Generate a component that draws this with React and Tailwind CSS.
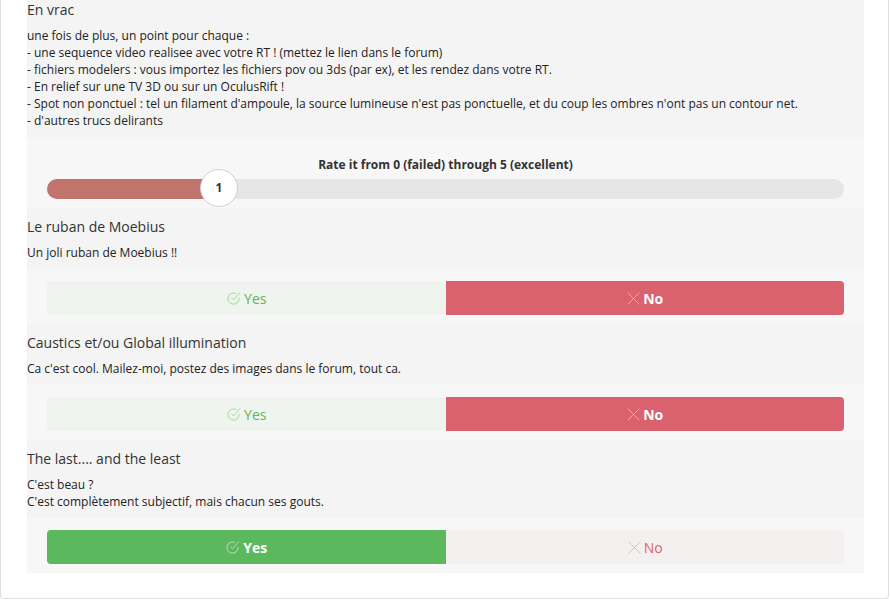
import React from 'react';

const CheckIcon = ({ className }) => (
  <svg viewBox="0 0 24 24" className={className} fill="none" stroke="currentColor" strokeWidth="1.3" strokeLinecap="round" strokeLinejoin="round">
    <path d="M21 11.5V12a9 9 0 1 1-5.3-8.2" />
    <path d="M22 3 12 14l-3-3" />
  </svg>
);

const XIcon = ({ className }) => (
  <svg viewBox="0 0 24 24" className={className} fill="none" stroke="currentColor" strokeWidth="1.1" strokeLinecap="round">
    <path d="M3 3 21 21M21 3 3 21" />
  </svg>
);

const Criterion = ({ title, lines }) => (
  <div className="bg-[#f4f4f4] pt-[9px] pb-[8px]">
    <h3 className="text-[14px] leading-[20px] text-[#333]">{title}</h3>
    <div className="mt-[7px] text-[12px] leading-[17px] text-[#222]">
      {lines.map((l, i) => (
        <div key={i}>{l}</div>
      ))}
    </div>
  </div>
);

const YesNo = ({ value }) => (
  <div className="bg-[#f7f7f7] px-5 pt-[12px] pb-[9px]">
    <div className="flex h-[34px]">
      <button
        className={
          value
            ? 'flex-1 flex items-center justify-center gap-[3px] rounded-l-[4px] bg-[#5cb85c] text-white font-bold text-[14px]'
            : 'flex-1 flex items-center justify-center gap-[3px] rounded-l-[4px] bg-[#eff4ee] text-[#5cb85c] text-[14px]'
        }
      >
        <CheckIcon className={value ? 'w-[15px] h-[15px] text-[#c8e8c8]' : 'w-[15px] h-[15px] text-[#8fd08f]'} />
        Yes
      </button>
      <button
        className={
          value
            ? 'flex-1 flex items-center justify-center gap-[2px] rounded-r-[4px] bg-[#f4f0f0] text-[#d9626e] text-[14px]'
            : 'flex-1 flex items-center justify-center gap-[2px] rounded-r-[4px] bg-[#d9626e] text-white font-bold text-[14px]'
        }
      >
        <XIcon className={value ? 'w-[15px] h-[15px] text-[#eba0a8]' : 'w-[15px] h-[15px] text-[#f2c4c9]'} />
        No
      </button>
    </div>
  </div>
);

const Rating = () => (
  <div className="bg-[#f7f7f7] px-5 pt-[17px] pb-[9px]">
    <div className="text-center text-[12px] leading-[17px] font-bold text-[#333]">
      Rate it from 0 (failed) through 5 (excellent)
    </div>
    <div className="relative mt-[6px] h-[20px] rounded-full bg-[#e6e6e6]">
      <div className="h-full w-[172px] rounded-l-full bg-[#c0746b]" />
      <div className="absolute left-[153px] top-[-10px] flex h-[38px] w-[38px] items-center justify-center rounded-full border border-[#d0d0d0] bg-white text-[12px] font-bold text-[#333]">
        1
      </div>
    </div>
  </div>
);

export default function App() {
  return (
    <div className="bg-white font-['Open_Sans',sans-serif]">
      <div className="w-[889px] border-x border-b border-[#dedede] rounded-b-[4px] pl-[26px] pr-[24px] pb-[25px]">
        <div className="bg-[#f4f4f4] pb-[10px]">
          <h3 className="text-[14px] leading-[20px] text-[#333]">En vrac</h3>
          <div className="mt-[7px] text-[12px] leading-[17px] text-[#222]">
            <div>une fois de plus, un point pour chaque :</div>
            <div>- une sequence video realisee avec votre RT ! (mettez le lien dans le forum)</div>
            <div>- fichiers modelers : vous importez les fichiers pov ou 3ds (par ex), et les rendez dans votre RT.</div>
            <div>- En relief sur une TV 3D ou sur un OculusRift !</div>
            <div>- Spot non ponctuel : tel un filament d'ampoule, la source lumineuse n'est pas ponctuelle, et du coup les ombres n'ont pas un contour net.</div>
            <div>- d'autres trucs delirants</div>
          </div>
        </div>
        <Rating />
        <Criterion title="Le ruban de Moebius" lines={['Un joli ruban de Moebius !!']} />
        <YesNo value={false} />
        <Criterion title="Caustics et/ou Global illumination" lines={["Ca c'est cool. Mailez-moi, postez des images dans le forum, tout ca."]} />
        <YesNo value={false} />
        <Criterion title="The last.... and the least" lines={["C'est beau ?", "C'est complètement subjectif, mais chacun ses gouts."]} />
        <YesNo value={true} />
      </div>
    </div>
  );
}
